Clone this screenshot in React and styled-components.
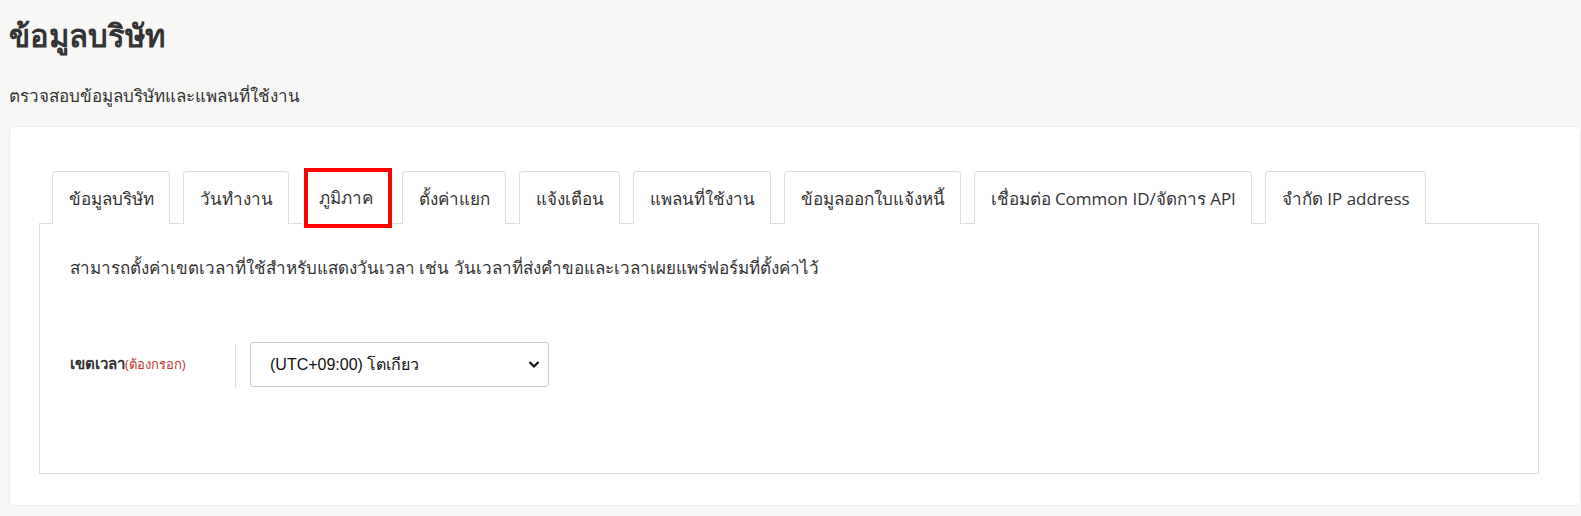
import React from "react";
import styled, { createGlobalStyle } from "styled-components";

const Global = createGlobalStyle`
  html, body { margin: 0; padding: 0; background: #f7f7f5; }
  body { font-family: "Open Sans", "Noto Sans", sans-serif; color: #333; }
  * { box-sizing: border-box; }
`;

const Page = styled.div`
  padding: 15px 0 16px 9px;
`;

const Title = styled.h1`
  margin: 0;
  font-size: 31px;
  font-weight: 700;
  line-height: 40px;
  color: #333;
`;

const Subtitle = styled.p`
  margin: 29px 0 18px;
  font-size: 17px;
  line-height: 24px;
  color: #333;
`;

const Card = styled.section`
  background: #fff;
  border: 1px solid #ecebe8;
  border-radius: 5px;
  padding: 43px 41px 31px 29px;
`;

const TabList = styled.div`
  display: flex;
  gap: 13px;
  padding-left: 13px;
  align-items: flex-end;
`;

const Tab = styled.div`
  position: relative;
  height: 53px;
  padding: 0 15.5px;
  display: flex;
  align-items: center;
  font-size: 17px;
  color: #333;
  background: #fff;
  border: 1px solid #ddd;
  border-bottom: none;
  border-radius: 4px 4px 0 0;
  white-space: nowrap;
  margin-bottom: -1px;
  z-index: ${(p) => (p.$active ? 2 : 1)};
  ${(p) =>
    p.$active &&
    `
    border-color: transparent;
    height: 54px;
    &::after {
      content: "";
      position: absolute;
      left: 1px;
      right: -4px;
      top: -3px;
      bottom: -4px;
      border: 4px solid #ff0000;
    }
  `}
`;

const Panel = styled.div`
  border: 1px solid #ddd;
  padding: 32px 30px 85px;
  position: relative;
`;

const Intro = styled.p`
  margin: 0;
  font-size: 17px;
  line-height: 24px;
  color: #333;
`;

const FormRow = styled.div`
  display: flex;
  align-items: center;
  margin-top: 60px;
`;

const Label = styled.div`
  width: 165px;
  font-size: 15px;
  font-weight: 700;
  color: #333;
  align-self: stretch;
  display: flex;
  align-items: center;
`;

const Required = styled.span`
  font-size: 13px;
  font-weight: 400;
  color: #c0392b;
`;

const Divider = styled.div`
  width: 1px;
  height: 44px;
  margin-top: 4px;
  background: #ddd;
  margin-right: 14px;
`;

const SelectBox = styled.div`
  position: relative;
  width: 299px;
  height: 45px;
  border: 1px solid #ccc;
  border-radius: 3px;
  display: flex;
  align-items: center;
  padding-left: 19px;
  font-family: "Liberation Sans", Arial, sans-serif;
  font-size: 16px;
  color: #111;
  background: #fff;
`;

const Chevron = styled.svg`
  position: absolute;
  right: 7px;
  top: 50%;
  transform: translateY(-50%);
`;

const tabs = [
  "ข้อมูลบริษัท",
  "วันทำงาน",
  "ภูมิภาค",
  "ตั้งค่าแยก",
  "แจ้งเตือน",
  "แพลนที่ใช้งาน",
  "ข้อมูลออกใบแจ้งหนี้",
  "เชื่อมต่อ Common ID/จัดการ API",
  "จำกัด IP address",
];

export default function App() {
  return (
    <Page>
      <Global />
      <Title>ข้อมูลบริษัท</Title>
      <Subtitle>ตรวจสอบข้อมูลบริษัทและแพลนที่ใช้งาน</Subtitle>
      <Card>
        <TabList>
          {tabs.map((t, i) => (
            <Tab key={t} $active={i === 2}>
              {t}
            </Tab>
          ))}
        </TabList>
        <Panel>
          <Intro>
            สามารถตั้งค่าเขตเวลาที่ใช้สำหรับแสดงวันเวลา เช่น วันเวลาที่ส่งคำขอและเวลาเผยแพร่ฟอร์มที่ตั้งค่าไว้
          </Intro>
          <FormRow>
            <Label>
              เขตเวลา<Required>(ต้องกรอก)</Required>
            </Label>
            <Divider />
            <SelectBox>
              (UTC+09:00) โตเกียว
              <Chevron width="14" height="14" viewBox="0 0 14 14">
                <path d="M2.5 5 L7 9.5 L11.5 5" fill="none" stroke="#111" strokeWidth="2.2" />
              </Chevron>
            </SelectBox>
          </FormRow>
        </Panel>
      </Card>
    </Page>
  );
}
